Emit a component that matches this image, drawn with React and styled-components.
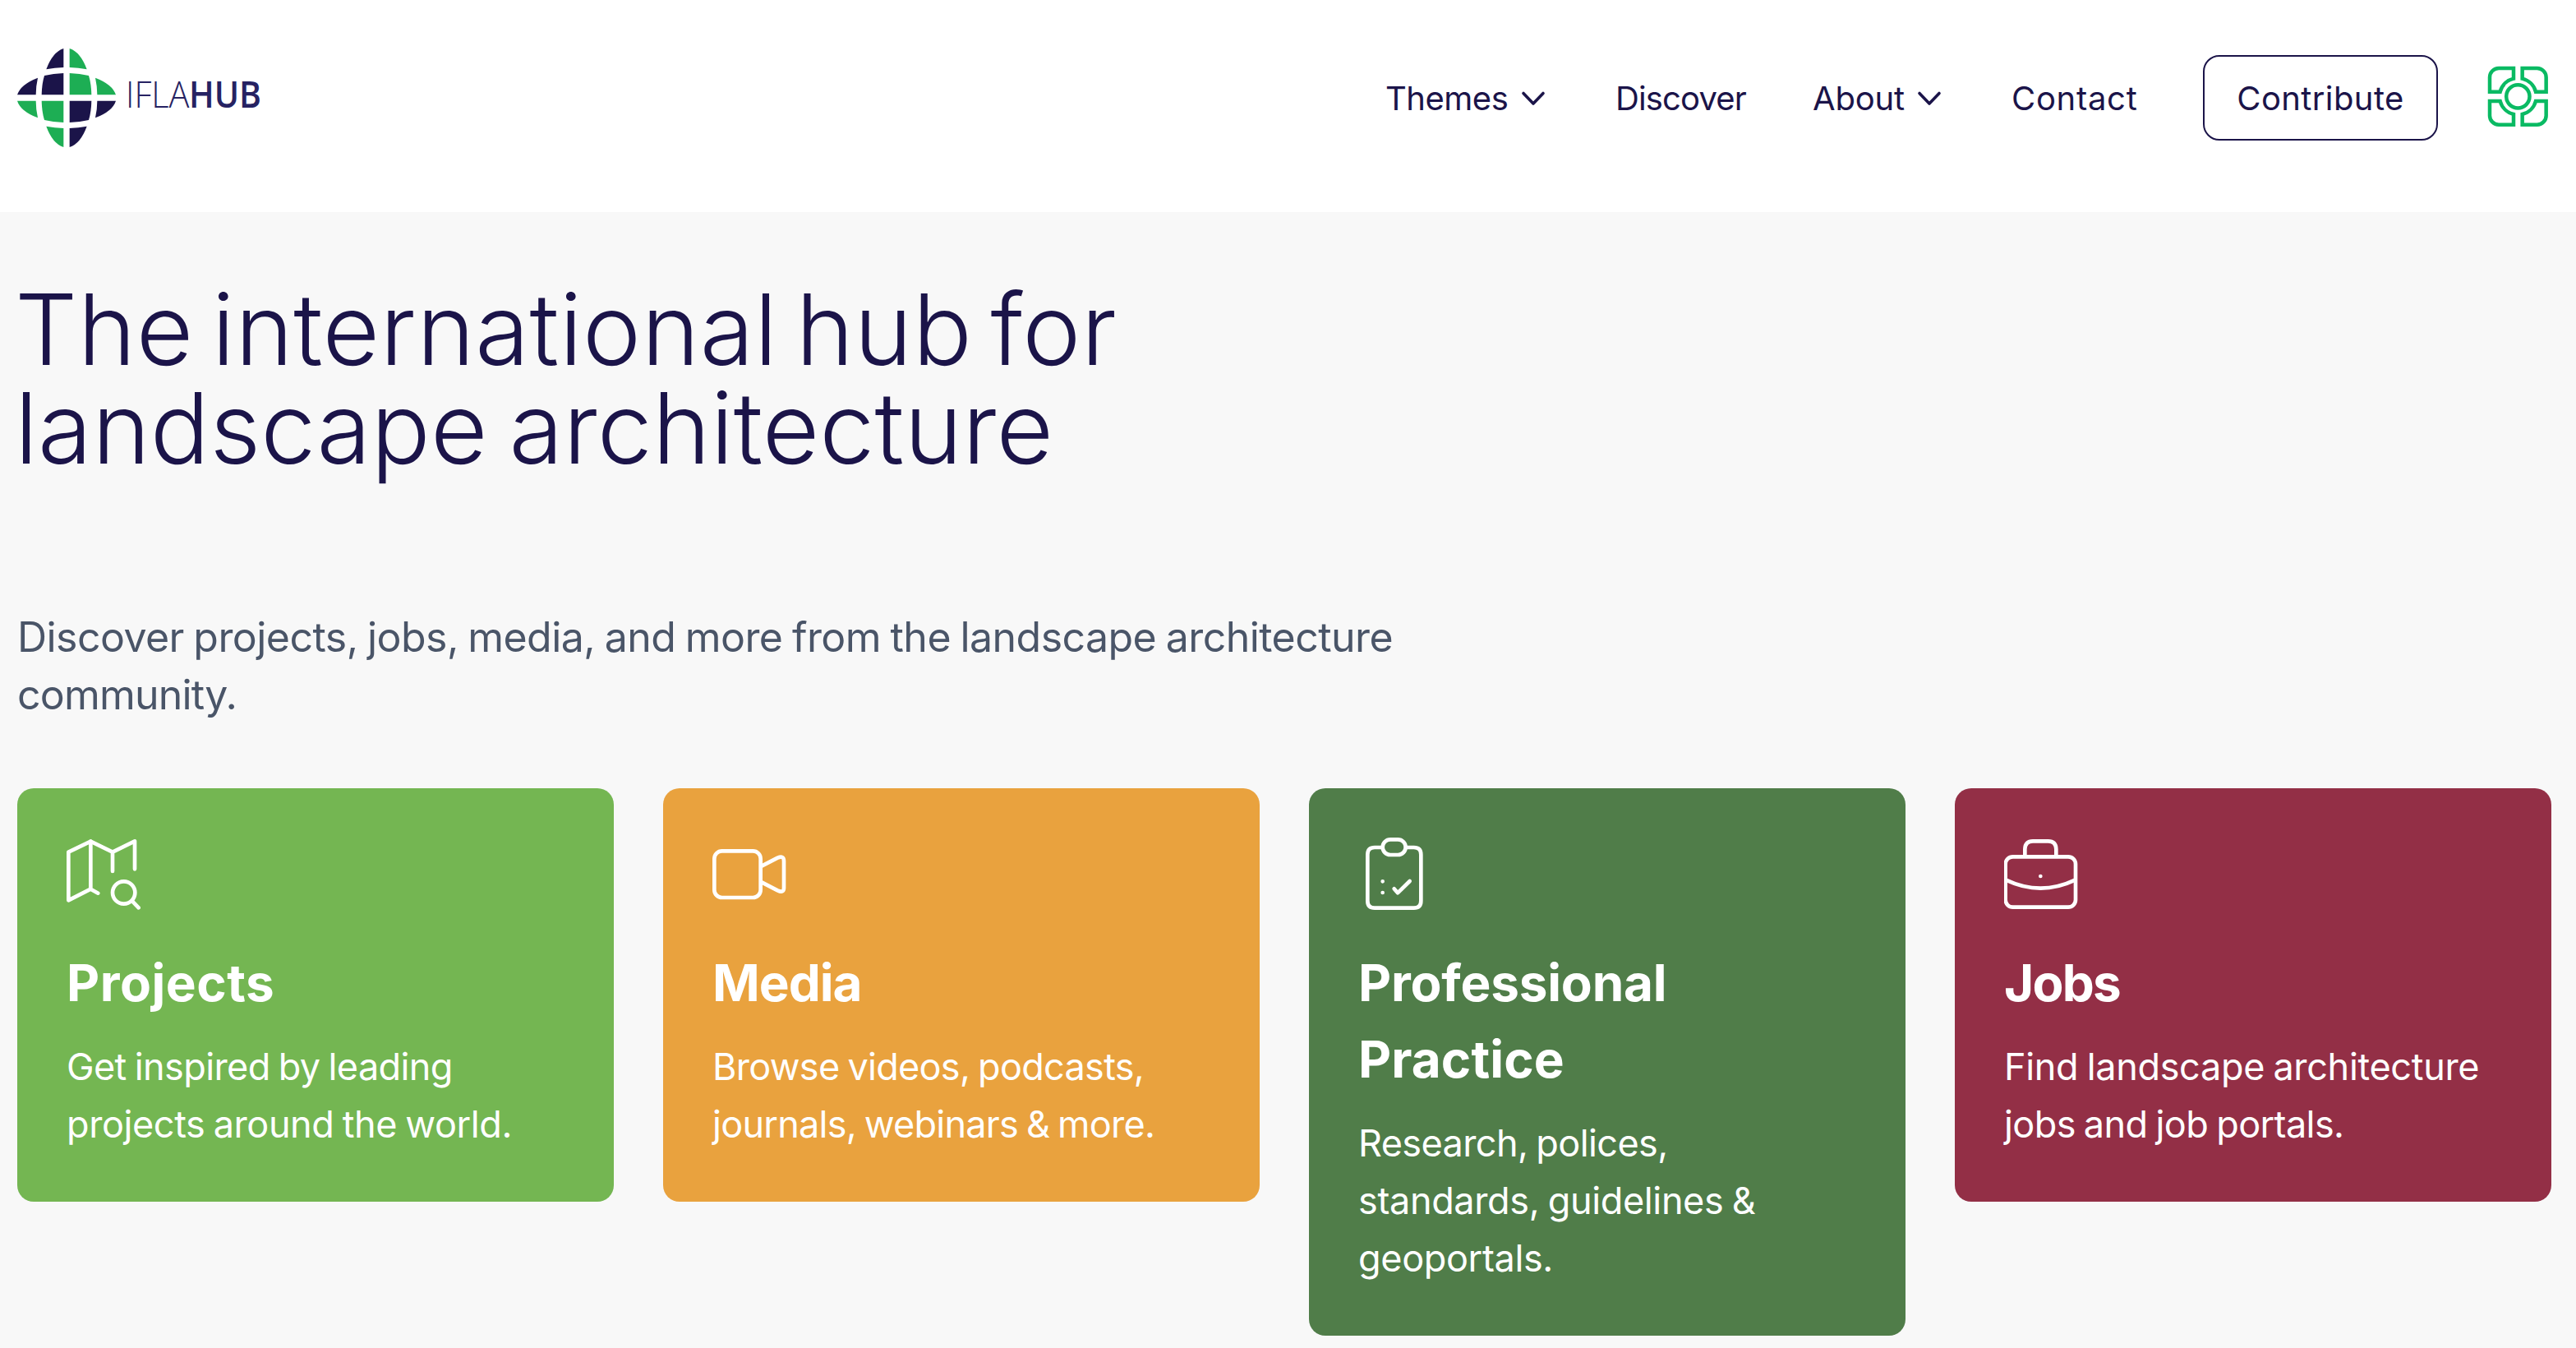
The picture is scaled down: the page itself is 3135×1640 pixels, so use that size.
import React from "react";
import styled, { createGlobalStyle } from "styled-components";

const cards = [
  {
    id: "projects",
    color: "#74b652",
    icon: <ProjectsIcon />,
    title: [["Projects", 0.5]],
    text: [
      ["Get inspired by leading", -0.6],
      ["projects around the world.", -0.4],
    ],
  },
  {
    id: "media",
    color: "#e9a23e",
    icon: <MediaIcon />,
    title: [["Media", -1]],
    text: [
      ["Browse videos, podcasts,", -0.7],
      ["journals, webinars & more.", -0.75],
    ],
  },
  {
    id: "practice",
    color: "#507d49",
    icon: <PracticeIcon />,
    title: [
      ["Professional", -0.2],
      ["Practice", 0.1],
    ],
    text: [
      ["Research, polices,", -0.6],
      ["standards, guidelines &", -0.35],
      ["geoportals.", -0.35],
    ],
  },
  {
    id: "jobs",
    color: "#932f46",
    icon: <JobsIcon />,
    title: [["Jobs", -1.8]],
    text: [
      ["Find landscape architecture", -0.32],
      ["jobs and job portals.", -0.6],
    ],
  },
];

function Logo() {
  return (
    <LogoSvg viewBox="63 87 960 360">
      <LogoQuarter fill="#1b1449" />
      <LogoQuarter fill="#1dae54" transform="translate(486 0) scale(-1 1)" />
      <LogoQuarter fill="#1dae54" transform="translate(0 534) scale(1 -1)" />
      <LogoQuarter fill="#1b1449" transform="translate(486 534) scale(-1 -1)" />
      <LogoText x="459" y="304" textLength="232" lengthAdjust="spacingAndGlyphs" $weight={350}>
        IFLA
      </LogoText>
      <LogoText x="690" y="304" textLength="264" lengthAdjust="spacingAndGlyphs" $weight={650}>
        HUB
      </LogoText>
    </LogoSvg>
  );
}

function LogoQuarter(props) {
  return (
    <g {...props}>
      <path d="M232 87V156Q200 157 169 163Q192 100 232 87Z" />
      <path d="M232 177V256H152Q153 215 162 186Q195 178 232 177Z" />
      <path d="M63 256Q75 218 138 194Q131 225 131 256Z" />
    </g>
  );
}

function Chevron() {
  return (
    <ChevronSvg viewBox="0 0 40 40">
      <path d="M8 14.5L20 27L32 14.5" />
    </ChevronSvg>
  );
}

function ProfileIcon() {
  const corner = "M132 54H78A33 33 0 0 0 45 87V140H83A67 67 0 0 1 132 92Z";

  return (
    <ProfileSvg viewBox="36 42 237 240">
      <path d={corner} />
      <path d={corner} transform="translate(296 0) scale(-1 1)" />
      <path d={corner} transform="translate(0 314) scale(1 -1)" />
      <path d={corner} transform="translate(296 314) scale(-1 -1)" />
      <circle cx="148" cy="157" r="42.5" />
    </ProfileSvg>
  );
}

function ProjectsIcon() {
  return (
    <CardIcon viewBox="63 57 270 270">
      <path d="M151 245V71L70 110V286L151 245L178 260" />
      <path d="M151 71L231 110L312 70V172M231 110V180" />
      <circle cx="272" cy="258" r="41" />
      <path d="M303 289L326 313" />
    </CardIcon>
  );
}

function MediaIcon() {
  return (
    <CardIcon viewBox="52 57 270 270">
      <rect x="59" y="106" width="169" height="170" rx="28" />
      <path d="M232 161L290 131Q313 121 313 143V241Q313 261 290 250L232 220" />
    </CardIcon>
  );
}

function PracticeIcon() {
  return (
    <CardIcon viewBox="40 57 270 270">
      <path d="M129 93H100Q74 93 74 119V288Q74 314 100 314H243Q269 314 269 288V119Q269 93 243 93H214" />
      <rect x="129" y="64" width="84" height="56" rx="28" />
      <path d="M129 217V217.1M129 258V258.1M171 244L184 259L228 216" />
    </CardIcon>
  );
}

function JobsIcon() {
  return (
    <CardIcon viewBox="59 57 270 270">
      <rect x="64" y="127" width="256" height="184" rx="27" />
      <path d="M135 124V99Q136 70 164 70H220Q248 70 249 99V124" />
      <path d="M66 212Q192 272 318 212M192 198V198.1" />
    </CardIcon>
  );
}

function Lines({ items }) {
  return items.map(([text, track]) => (
    <Line key={text} $track={track}>
      {text}
    </Line>
  ));
}

function App() {
  return (
    <>
      <GlobalStyle />
      <Header>
        <Logo />
        <Nav>
          <NavItem>
            <NavLabel $width={160} $track={-0.5}>Themes</NavLabel>
            <Chevron />
          </NavItem>
          <NavItem>
            <NavLabel $width={160} $track={-0.85}>Discover</NavLabel>
          </NavItem>
          <NavItem>
            <NavLabel $width={122} $track={-0.2}>About</NavLabel>
            <Chevron />
          </NavItem>
          <NavItem>
            <NavLabel $width={153} $track={0.7}>Contact</NavLabel>
          </NavItem>
          <ContributeBtn>Contribute</ContributeBtn>
        </Nav>
        <ProfileIcon />
      </Header>
      <Main>
        <Title>
          <Line $track={0.4} $space={-12}>The international hub for</Line>
          <Line $track={0.1} $space={-8}>landscape architecture</Line>
        </Title>
        <Intro>
          <Lines
            items={[
              ["Discover projects, jobs, media, and more from the landscape architecture", -0.55],
              ["community.", -0.8],
            ]}
          />
        </Intro>
        <CardGrid>
          {cards.map((card) => (
            <Card key={card.id} $color={card.color}>
              {card.icon}
              <CardTitle>
                <Lines items={card.title} />
              </CardTitle>
              <CardText>
                <Lines items={card.text} />
              </CardText>
            </Card>
          ))}
        </CardGrid>
      </Main>
    </>
  );
}

export default App;

const GlobalStyle = createGlobalStyle`
  * {
    box-sizing: border-box;
  }

  body {
    margin: 0;
    height: 1640px;
    overflow: hidden;
    background: #f8f8f8;
    color: #1b1449;
    font-family: Inter, "Liberation Sans", sans-serif;
  }
`;

const Header = styled.header`
  display: flex;
  align-items: center;
  height: 258px;
  padding: 59px 29px 79px 21px;
  background: #fff;
`;

const LogoSvg = styled.svg`
  width: 320px;
  height: 120px;
  overflow: visible;
`;

const LogoText = styled.text`
  fill: #262262;
  font-family: "Open Sans", sans-serif;
  font-size: 134px;
  font-weight: ${(props) => props.$weight};
`;

const Nav = styled.nav`
  display: flex;
  align-items: center;
  gap: 80px;
  margin-left: auto;
  margin-right: 60px;
`;

const NavItem = styled.div`
  display: flex;
  align-items: center;
`;

const NavLabel = styled.span`
  width: ${(props) => props.$width}px;
  padding-top: 1px;
  font-size: 40px;
  line-height: 50px;
  letter-spacing: ${(props) => props.$track}px;
  white-space: nowrap;
`;

const ChevronSvg = styled.svg`
  width: 40px;
  height: 40px;
  fill: none;
  stroke: #1b1449;
  stroke-width: 3.6;
  stroke-linecap: round;
  stroke-linejoin: round;
`;

const ContributeBtn = styled.button`
  width: 286px;
  height: 104px;
  padding: 0;
  border: 2px solid #1b1449;
  border-radius: 20px;
  background: #fff;
  color: #1b1449;
  font-family: inherit;
  font-size: 40px;
  letter-spacing: 0.4px;
`;

const ProfileSvg = styled.svg`
  width: 79px;
  height: 80px;
  fill: none;
  stroke: #0aba63;
  stroke-width: 13.5;
`;

const Main = styled.main`
  padding: 83px 30px 0 21px;
`;

const Line = styled.span`
  display: block;
  letter-spacing: ${(props) => props.$track}px;
  word-spacing: ${(props) => props.$space ?? -2}px;
  white-space: nowrap;
`;

const Title = styled.h1`
  margin: 0 0 159px -3px;
  font-size: 120px;
  font-weight: 300;
  line-height: 120px;
`;

const Intro = styled.p`
  margin: 0 0 79px;
  color: #4a5568;
  font-size: 50px;
  line-height: 70px;
`;

const CardGrid = styled.div`
  display: grid;
  grid-template-columns: repeat(4, 1fr);
  align-items: start;
  gap: 60px;
`;

const Card = styled.div`
  padding: 60px 60px 59px;
  border-radius: 20px;
  background: ${(props) => props.$color};
  color: #fff;
`;

const CardIcon = styled.svg`
  display: block;
  width: 90px;
  height: 90px;
  margin-bottom: 40px;
  fill: none;
  stroke: #fff;
  stroke-width: 14;
  stroke-linecap: round;
  stroke-linejoin: round;
`;

const CardTitle = styled.h2`
  margin: 0 0 21px;
  font-size: 62px;
  font-weight: 700;
  line-height: 93px;
`;

const CardText = styled.p`
  margin: 0;
  font-size: 45px;
  line-height: 70px;
`;
